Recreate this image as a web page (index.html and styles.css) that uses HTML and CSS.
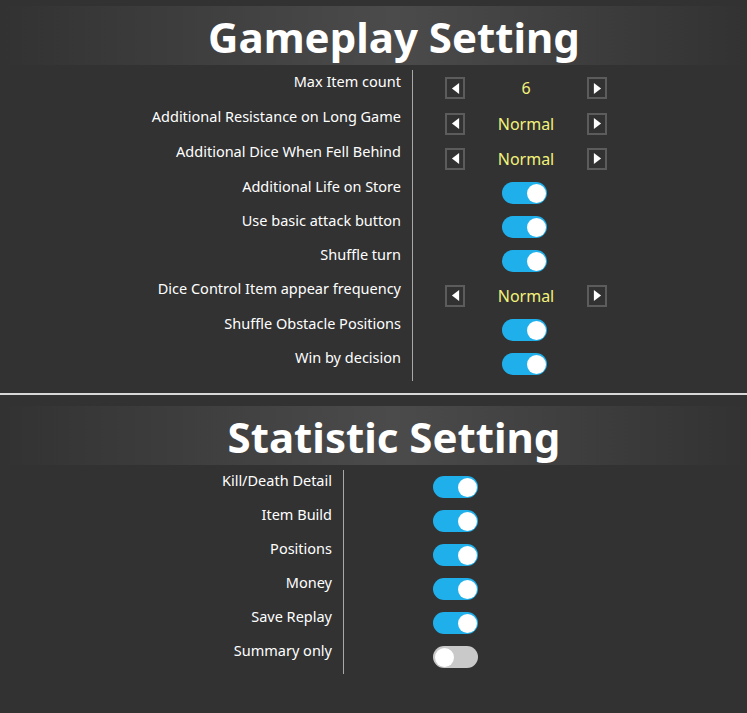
FILE: index.html
```html
<!DOCTYPE html>
<html>
<head>
<meta charset="utf-8">
<link rel="stylesheet" href="styles.css">
</head>
<body>
<section class="section gameplay">
  <div class="band"><h1 class="title">Gameplay Setting</h1></div>
  <div class="rows">
    <div class="row arrow-row"><div class="label">Max Item count</div><div class="ctrl"><div class="stepper"><span class="abox"><svg viewBox="0 0 10 14" class="tri"><polygon points="9,1 1,7 9,13"/></svg></span><span class="val">6</span><span class="abox"><svg viewBox="0 0 10 14" class="tri"><polygon points="1,1 9,7 1,13"/></svg></span></div></div></div>
    <div class="row arrow-row"><div class="label">Additional Resistance on Long Game</div><div class="ctrl"><div class="stepper"><span class="abox"><svg viewBox="0 0 10 14" class="tri"><polygon points="9,1 1,7 9,13"/></svg></span><span class="val">Normal</span><span class="abox"><svg viewBox="0 0 10 14" class="tri"><polygon points="1,1 9,7 1,13"/></svg></span></div></div></div>
    <div class="row arrow-row"><div class="label">Additional Dice When Fell Behind</div><div class="ctrl"><div class="stepper"><span class="abox"><svg viewBox="0 0 10 14" class="tri"><polygon points="9,1 1,7 9,13"/></svg></span><span class="val">Normal</span><span class="abox"><svg viewBox="0 0 10 14" class="tri"><polygon points="1,1 9,7 1,13"/></svg></span></div></div></div>
    <div class="row"><div class="label">Additional Life on Store</div><div class="ctrl"><span class="toggle on"><span class="knob"></span></span></div></div>
    <div class="row"><div class="label">Use basic attack button</div><div class="ctrl"><span class="toggle on"><span class="knob"></span></span></div></div>
    <div class="row"><div class="label">Shuffle turn</div><div class="ctrl"><span class="toggle on"><span class="knob"></span></span></div></div>
    <div class="row arrow-row"><div class="label">Dice Control Item appear frequency</div><div class="ctrl"><div class="stepper"><span class="abox"><svg viewBox="0 0 10 14" class="tri"><polygon points="9,1 1,7 9,13"/></svg></span><span class="val">Normal</span><span class="abox"><svg viewBox="0 0 10 14" class="tri"><polygon points="1,1 9,7 1,13"/></svg></span></div></div></div>
    <div class="row"><div class="label">Shuffle Obstacle Positions</div><div class="ctrl"><span class="toggle on"><span class="knob"></span></span></div></div>
    <div class="row"><div class="label">Win by decision</div><div class="ctrl"><span class="toggle on"><span class="knob"></span></span></div></div>
  </div>
</section>
<hr class="sep">
<section class="section stats">
  <div class="band"><h1 class="title">Statistic Setting</h1></div>
  <div class="rows">
    <div class="row"><div class="label">Kill/Death Detail</div><div class="ctrl"><span class="toggle on"><span class="knob"></span></span></div></div>
    <div class="row"><div class="label">Item Build</div><div class="ctrl"><span class="toggle on"><span class="knob"></span></span></div></div>
    <div class="row"><div class="label">Positions</div><div class="ctrl"><span class="toggle on"><span class="knob"></span></span></div></div>
    <div class="row"><div class="label">Money</div><div class="ctrl"><span class="toggle on"><span class="knob"></span></span></div></div>
    <div class="row"><div class="label">Save Replay</div><div class="ctrl"><span class="toggle on"><span class="knob"></span></span></div></div>
    <div class="row"><div class="label">Summary only</div><div class="ctrl"><span class="toggle off"><span class="knob"></span></span></div></div>
  </div>
</section>
</body>
</html>
```
FILE: styles.css
```css
html, body {
  margin: 0;
  padding: 0;
  background: #323232;
  width: 747px;
  height: 713px;
  overflow: hidden;
  font-family: "Noto Sans", "Open Sans", sans-serif;
  color: #fff;
}
.section {
  display: block;
}
.gameplay {
  padding-top: 6px;
}
.band {
  height: 59px;
  box-sizing: border-box;
  background: linear-gradient(to right, rgba(80,80,80,0) 0%, #4b4b4b 52.7%, rgba(80,80,80,0) 100%);
  display: flex;
  justify-content: center;
  padding-left: 41px;
  padding-top: 3px;
  overflow: hidden;
}
.title {
  margin: 0;
  font-size: 42px;
  font-weight: 700;
  line-height: 56px;
  color: #fff;
  letter-spacing: 0;
}
.gameplay .rows {
  padding-top: 5px;
}
.gameplay .row {
  grid-template-columns: 413px 1fr;
}
.row {
  display: grid;
  height: 34px;
}
.gameplay .row:first-child .label {
  padding-top: 1px;
}
.gameplay .row:first-child {
  height: 36px;
}
.arrow-row {
  height: 35px;
}
.label {
  border-right: 1px solid #a8a8a8;
  box-sizing: border-box;
  padding-right: 11px;
  padding-top: 0;
  text-align: right;
  font-size: 14.5px;
  line-height: 20px;
  white-space: nowrap;
}
.ctrl {
  display: flex;
  align-items: center;
}
.stepper {
  display: flex;
  align-items: center;
  margin-left: 32px;
}
.abox {
  width: 20px;
  height: 22px;
  box-sizing: border-box;
  border: 2px solid #5c5c5c;
  display: flex;
  align-items: center;
  justify-content: center;
}
.tri {
  width: 9px;
  height: 13px;
  fill: #fff;
}
.val {
  width: 122px;
  text-align: center;
  color: #f2f27a;
  font-size: 16px;
  line-height: 22px;
}
.toggle {
  margin-left: 89px;
  width: 45px;
  height: 22px;
  border-radius: 11px;
  position: relative;
  display: block;
}
.toggle.on {
  background: #1fb0ec;
}
.toggle.off {
  background: #c9c9c9;
}
.knob {
  position: absolute;
  top: 1.5px;
  width: 19px;
  height: 19px;
  border-radius: 50%;
  background: #fff;
}
.on .knob {
  right: 1.5px;
}
.off .knob {
  left: 1.5px;
}
.sep {
  margin: 12px 0 0 0;
  border: 0;
  height: 2px;
  background: #d8d8d8;
}
.stats {
  padding-top: 11px;
}
.stats .rows {
  padding-top: 5px;
}
.stats .row {
  grid-template-columns: 344px 1fr;
}
```
